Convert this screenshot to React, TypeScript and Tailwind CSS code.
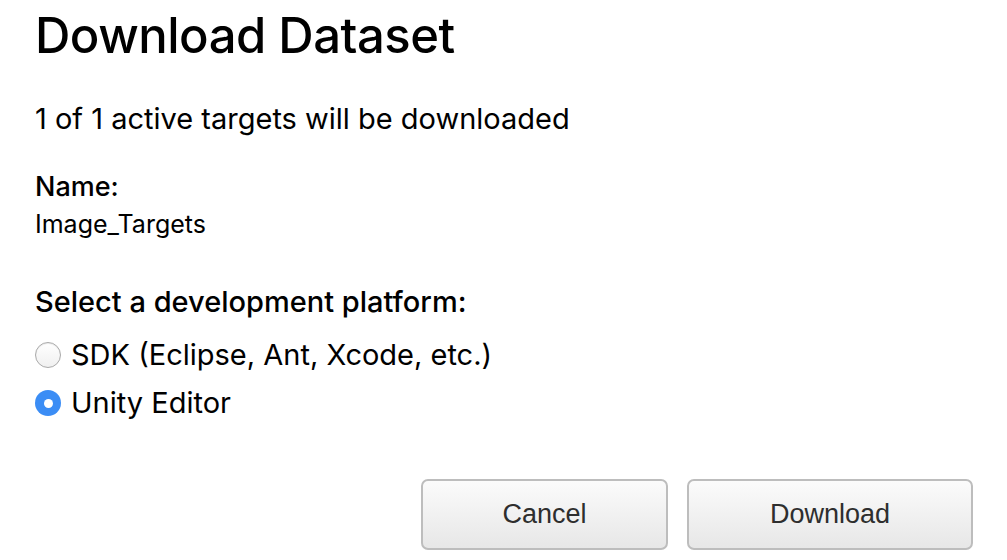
export default function App() {
  return (
    <div
      className="w-[1007px] h-[560px] bg-white overflow-hidden text-black"
      style={{ fontFamily: "Inter, 'Noto Sans', sans-serif" }}
    >
      <div className="pl-[35px] pt-[6px]">
        <h1 className="text-[49px] font-medium leading-[60px] tracking-[-0.5px]">Download Dataset</h1>
        <p className="mt-[35px] text-[29px] leading-[36px]">1 of 1 active targets will be downloaded</p>

        <div className="mt-[34px]">
          <div className="text-[27px] font-medium leading-[32px]">Name:</div>
          <div className="mt-[6px] text-[25px] leading-[30px]">Image_Targets</div>
        </div>

        <div className="mt-[46px] text-[29px] font-medium leading-[34px]">Select a development platform:</div>

        <div className="mt-[19px] flex flex-col gap-[14px]">
          <label className="flex items-center gap-[10px] text-[29px] leading-[34px]">
            <span className="w-[26px] h-[26px] rounded-full border border-[#a9a9a9] bg-gradient-to-b from-white to-[#f0f0f0] shadow-[inset_0_1px_1px_rgba(0,0,0,0.08)]" />
            SDK (Eclipse, Ant, Xcode, etc.)
          </label>
          <label className="flex items-center gap-[10px] text-[29px] leading-[34px]">
            <span className="w-[26px] h-[26px] rounded-full bg-[#3b8df5] flex items-center justify-center">
              <span className="w-[9px] h-[9px] rounded-full bg-white" />
            </span>
            Unity Editor
          </label>
        </div>
      </div>

      <div className="mt-[59px] flex justify-end gap-[19px] pr-[34px]">
        <button
          className="w-[247px] h-[71px] rounded-[7px] border-2 border-[#bdbdbd] bg-gradient-to-b from-[#fbfbfb] to-[#e7e7e7] text-[27px] text-[#2e2e2e]"
          style={{ fontFamily: "'Liberation Sans', Arial, sans-serif" }}
        >
          Cancel
        </button>
        <button
          className="w-[286px] h-[71px] rounded-[7px] border-2 border-[#bdbdbd] bg-gradient-to-b from-[#fbfbfb] to-[#e7e7e7] text-[27px] text-[#2e2e2e]"
          style={{ fontFamily: "'Liberation Sans', Arial, sans-serif" }}
        >
          Download
        </button>
      </div>
    </div>
  );
}
